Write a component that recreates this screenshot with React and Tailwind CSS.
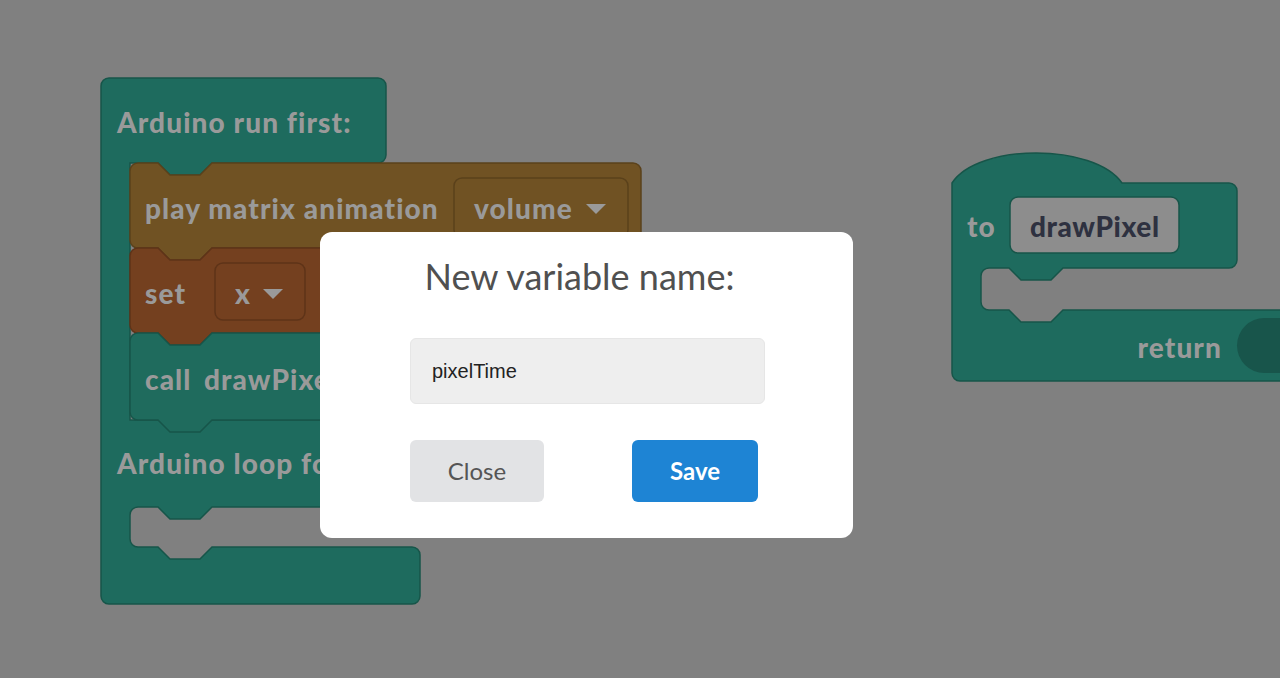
import React from "react";

function stmt(x, y, w, h, r = 8) {
  return `M ${x} ${y + r} A ${r} ${r} 0 0 1 ${x + r} ${y} H ${x + 28} L ${x + 40} ${y + 12} H ${x + 70} L ${x + 82} ${y} H ${x + w - r} A ${r} ${r} 0 0 1 ${x + w} ${y + r} V ${y + h - r} A ${r} ${r} 0 0 1 ${x + w - r} ${y + h} H ${x + 82} L ${x + 70} ${y + h + 12} H ${x + 40} L ${x + 28} ${y + h} H ${x + r} A ${r} ${r} 0 0 1 ${x} ${y + h - r} Z`;
}

const mainC = `M 101 86 A 8 8 0 0 1 109 78 H 378 A 8 8 0 0 1 386 86 V 155 A 8 8 0 0 1 378 163 H 212 L 200 175 H 170 L 158 163 H 130 V 420 H 460 V 507 H 212 L 200 519 H 170 L 158 507 H 138 A 8 8 0 0 0 130 515 V 539 A 8 8 0 0 0 138 547 H 158 L 170 559 H 200 L 212 547 H 412 A 8 8 0 0 1 420 555 V 596 A 8 8 0 0 1 412 604 H 109 A 8 8 0 0 1 101 596 Z`;

const procDef = `M 952 183 C 978 143, 1094 143, 1122 183 H 1229 A 8 8 0 0 1 1237 191 V 260 A 8 8 0 0 1 1229 268 H 1063 L 1051 280 H 1021 L 1009 268 H 989 A 8 8 0 0 0 981 276 V 302 A 8 8 0 0 0 989 310 H 1009 L 1021 322 H 1051 L 1063 310 H 1300 V 381 H 960 A 8 8 0 0 1 952 373 Z`;

const LBL = "font-['Lato','Noto_Sans',sans-serif] font-black text-[28px] tracking-[1.1px] fill-[#9a9a9a]";
const LBL_DARK = "font-['Lato','Noto_Sans',sans-serif] font-black text-[28px] tracking-[0.6px] fill-[#2e3140]";

function Label({ x, y, children, dark, end }) {
  return (
    <text
      x={x}
      y={y}
      dominantBaseline="central"
      textAnchor={end ? "end" : "start"}
      className={dark ? LBL_DARK : LBL}
    >
      {children}
    </text>
  );
}

export default function App() {
  return (
    <div className="relative w-[1280px] h-[678px] overflow-hidden bg-[#808080]">
      <svg className="absolute inset-0" width="1280" height="678" viewBox="0 0 1280 678">
        {/* main C block */}
        <path d={mainC} fill="#1e6b5e" stroke="#175549" strokeWidth="1.5" />
        <Label x={117} y={122}>Arduino run first:</Label>
        <Label x={117} y={463}>Arduino loop forever:</Label>

        {/* play matrix animation */}
        <path d={stmt(130, 163, 511, 85)} fill="#705223" stroke="#5a411b" strokeWidth="1.5" />
        <Label x={145} y={208}>play matrix animation</Label>
        <rect x="454" y="178" width="174" height="60" rx="8" fill="#705223" stroke="#5a411b" strokeWidth="1.5" />
        <Label x={474} y={208}>volume</Label>
        <path d="M 586 204 H 606 L 596 214 Z" fill="#9a9a9a" />

        {/* set */}
        <path d={stmt(130, 248, 420, 85)} fill="#74401f" stroke="#5e3318" strokeWidth="1.5" />
        <Label x={145} y={293}>set</Label>
        <rect x="215" y="263" width="90" height="57" rx="8" fill="#74401f" stroke="#5e3318" strokeWidth="1.5" />
        <Label x={235} y={293}>x</Label>
        <path d="M 263 289 H 283 L 273 299 Z" fill="#9a9a9a" />

        {/* call */}
        <path d={stmt(130, 333, 420, 87)} fill="#1f6b5d" stroke="#175549" strokeWidth="1.5" />
        <Label x={145} y={379}>call</Label>
        <Label x={204} y={379}>drawPixel</Label>

        {/* procedure definition */}
        <path d={procDef} fill="#1e6b5e" stroke="#175549" strokeWidth="1.5" />
        <Label x={967} y={226}>to</Label>
        <rect x="1010" y="197" width="169" height="56" rx="8" fill="#8d8d8d" stroke="#175549" strokeWidth="1.5" />
        <Label x={1030} y={226} dark>drawPixel</Label>
        <Label x={1222} y={347} end>return</Label>
        <rect x="1237" y="318" width="120" height="55" rx="27.5" fill="#18554b" />
      </svg>

      <div className="absolute inset-0 pl-[320px] pt-[232px]">
        <div className="w-[533px] h-[306px] bg-white rounded-[12px] flex flex-col pl-[90px] pr-[88px]">
          <h2 className="mt-[18px] h-[52px] flex items-center justify-center pr-[16px] text-[36px] leading-none text-[#505050] font-['Lato','Noto_Sans',sans-serif]">
            New variable name:
          </h2>
          <div className="mt-[36px] h-[66px] w-[355px] rounded-[6px] bg-[#eeeeee] border border-[#e6e6e6] flex items-center pl-[21px] text-[20px] text-[#222222] font-['Liberation_Sans',Arial,sans-serif]">
            pixelTime
          </div>
          <div className="mt-[36px] flex gap-[88px]">
            <button className="w-[134px] h-[62px] rounded-[6px] bg-[#e2e3e5] text-[24px] text-[#555555] font-['Lato','Noto_Sans',sans-serif]">
              Close
            </button>
            <button className="w-[126px] h-[62px] rounded-[6px] bg-[#1e84d4] text-[24px] text-white font-bold font-['Lato','Noto_Sans',sans-serif]">
              Save
            </button>
          </div>
        </div>
      </div>
    </div>
  );
}
